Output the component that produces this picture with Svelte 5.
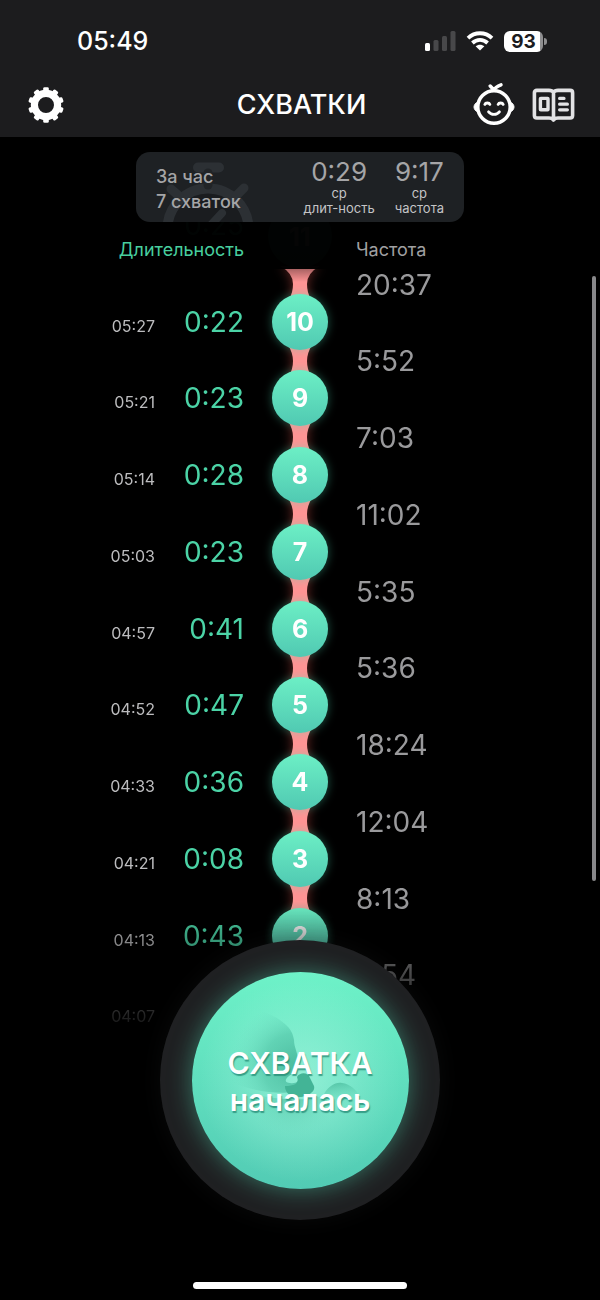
<script>
    let perHour = 7;
    let averages = [
        { value: "0:29", label: "длит-ность" },
        { value: "9:17", label: "частота" },
    ];

    let contractions = [
        { number: 11, time: "", duration: "0:25", frequency: "" },
        { number: 10, time: "05:27", duration: "0:22", frequency: "20:37" },
        { number: 9, time: "05:21", duration: "0:23", frequency: "5:52" },
        { number: 8, time: "05:14", duration: "0:28", frequency: "7:03" },
        { number: 7, time: "05:03", duration: "0:23", frequency: "11:02" },
        { number: 6, time: "04:57", duration: "0:41", frequency: "5:35" },
        { number: 5, time: "04:52", duration: "0:47", frequency: "5:36" },
        { number: 4, time: "04:33", duration: "0:36", frequency: "18:24" },
        { number: 3, time: "04:21", duration: "0:08", frequency: "12:04" },
        { number: 2, time: "04:13", duration: "0:43", frequency: "8:13" },
        { number: 1, time: "04:07", duration: "0:38", frequency: "5:54" },
    ];

    const teeth = [0, 36, 72, 108, 144, 180, 216, 252, 288, 324];
</script>

<div class="app">
    <header>
        <div class="status">
            <span class="clock">05:49</span>
            <div class="indicators">
                <svg width="31" height="20" viewBox="0 0 31 20" aria-hidden="true">
                    <rect x="0" y="12" width="5" height="8" rx="1.5" fill="#fff" />
                    <rect x="8.5" y="9" width="5" height="11" rx="1.5" fill="#48484a" />
                    <rect x="17" y="5" width="5" height="15" rx="1.5" fill="#48484a" />
                    <rect x="25.5" y="0" width="5" height="20" rx="1.5" fill="#48484a" />
                </svg>
                <svg width="28" height="20" viewBox="0 0 28 20" fill="none" stroke="#fff" stroke-width="3.8" aria-hidden="true">
                    <path d="M2 7.2C8.8 .6 19.2 .6 26 7.2" />
                    <path d="M6.4 12C10.8 7.9 17.2 7.9 21.6 12" />
                    <path d="M14 19.6 9.6 15.3C12 13.2 16 13.2 18.4 15.3Z" fill="#fff" stroke="none" />
                </svg>
                <div class="battery"><span>93</span></div>
            </div>
        </div>

        <nav>
            <div class="side">
                <button class="icon" aria-label="Настройки">
                    <svg width="36" height="36" viewBox="-18 -18 36 36">
                        <circle r="11.6" fill="none" stroke="#fff" stroke-width="7.2" />
                        {#each teeth as angle}
                            <rect x="-2.8" y="-17.8" width="5.6" height="6" rx="1.4" fill="#fff" transform="rotate({angle})" />
                        {/each}
                    </svg>
                </button>
            </div>
            <h1>СХВАТКИ</h1>
            <div class="side right">
                <button class="icon" aria-label="Малыш">
                    <svg width="42" height="44" viewBox="0 2 42 44" fill="none" stroke="#fff" stroke-linecap="round" stroke-linejoin="round">
                        <circle cx="21" cy="26" r="16.2" stroke-width="3.5" />
                        <path d="M4.6 21C2.5 22 1 24 1 26S2.5 30 4.6 31Z" fill="#fff" stroke-width="1" />
                        <path d="M37.4 21C39.5 22 41 24 41 26S39.5 30 37.4 31Z" fill="#fff" stroke-width="1" />
                        <path d="M21 9 17.2 5M21 9C22 6.6 24.6 5 28 3.8" stroke-width="3.4" />
                        <path d="M11.8 23.4C12.5 21.5 16.2 21.5 16.9 23.4M25.1 23.4C25.8 21.5 29.5 21.5 30.2 23.4" stroke-width="2.8" />
                        <path d="M15.6 30.8C18.4 34.2 23.6 34.2 26.4 30.8" stroke-width="2.9" />
                    </svg>
                </button>
                <button class="icon" aria-label="Справка">
                    <svg width="43" height="36" viewBox="0 0 43 36" fill="none" stroke="#e3e3e5" stroke-width="3.6" stroke-linecap="round" stroke-linejoin="round">
                        <path d="M21.5 5.4C20.6 4 19 3.4 17 3.4H4.8C3.2 3.4 2.4 4.2 2.4 5.8V28.6C2.4 30.2 3.2 31 4.8 31H17C19 31 20.6 31.6 21.5 33C22.4 31.6 24 31 26 31H38.2C39.8 31 40.6 30.2 40.6 28.6V5.8C40.6 4.2 39.8 3.4 38.2 3.4H26C24 3.4 22.4 4 21.5 5.4ZV32" />
                        <rect x="8.4" y="11.4" width="7.6" height="11.4" rx="0.4" stroke-width="3.4" />
                        <path d="M27.6 11.4H32M27.6 17.2H35.4M27.6 22.8H35.4" stroke-width="3.2" />
                    </svg>
                </button>
            </div>
        </nav>
    </header>

    <main>
        <div class="top">
            <section class="summary">
                <svg class="stopwatch" width="120" height="70" viewBox="0 0 120 70" fill="none" stroke="#2c3034" stroke-linecap="round" aria-hidden="true">
                    <circle cx="72" cy="77" r="40.5" stroke-width="10" fill="#1a1c1f" />
                    <path d="M62 15.5H83" stroke-width="10" />
                    <path d="M72 21V33" stroke-width="9" stroke="#212427" />
                    <path d="M35 37 43 44M108 36 100 44" stroke-width="9" />
                    <path d="M74 74 86 61" stroke-width="8" />
                </svg>
                <p>За час<br />{perHour} схваток</p>
                <div class="averages">
                    {#each averages as average}
                        <div class="average">
                            <strong>{average.value}</strong>
                            <span>ср</span>
                            <span>{average.label}</span>
                        </div>
                    {/each}
                </div>
            </section>
            <div class="headings">
                <span class="heading-duration">Длительность</span>
                <span class="heading-frequency">Частота</span>
            </div>
        </div>

        <ol>
            {#each contractions as item, index}
                <li class:latest={index === 0}>
                    <div class="left">
                        <time>{item.time}</time>
                        <span class="duration">{item.duration}</span>
                    </div>
                    <div class="badge">
                        <svg width="56" height="81" viewBox="0 0 56 81" aria-hidden="true">
                            <defs>
                                <linearGradient id="bead" x1="0" y1="0" x2="0" y2="1">
                                    <stop offset="0" stop-color="#6cefc5" />
                                    <stop offset="1" stop-color="#50c9b2" />
                                </linearGradient>
                                <linearGradient id="shade" gradientUnits="userSpaceOnUse" x1="0" y1="76" x2="0" y2="90">
                                    <stop offset="0" stop-color="#a35f5f" />
                                    <stop offset="1" stop-color="#ff9494" />
                                </linearGradient>
                            </defs>
                            {#if index === 0}
                                <path class="neck" d="M8 74Q21 81 21 92Q21 101 17 107H39Q35 101 35 92Q35 81 48 74Z" style:fill="url(#shade)" />
                                <circle class="bead" cx="28" cy="44" r="32" fill="url(#bead)" />
                            {:else}
                                {#if index < contractions.length - 1}
                                    <path class="neck" d="M16 76Q21 84 21 92Q21 100 17 107H39Q35 100 35 92Q35 84 40 76Z" />
                                {/if}
                                <circle class="bead" cx="28" cy="53" r="28" fill="url(#bead)" />
                            {/if}
                        </svg>
                        <span>{item.number}</span>
                    </div>
                    <span class="frequency">{item.frequency}</span>
                </li>
            {/each}
        </ol>
        <div class="scrollbar"></div>
    </main>

    <footer>
        <div class="dial">
            <button class="start">
                <svg class="baby" viewBox="0 0 217 217" aria-hidden="true">
                    <defs>
                        <radialGradient id="head" gradientUnits="userSpaceOnUse" cx="104" cy="94" r="66">
                            <stop offset="0" stop-color="#43b598" stop-opacity="0.9" />
                            <stop offset="0.5" stop-color="#4dc2a4" stop-opacity="0.6" />
                            <stop offset="1" stop-color="#6fe3c5" stop-opacity="0" />
                        </radialGradient>
                        <linearGradient id="foot" x1="0.3" y1="0" x2="0.6" y2="1">
                            <stop offset="0" stop-color="#45b798" stop-opacity="0.7" />
                            <stop offset="1" stop-color="#6fe3c5" stop-opacity="0" />
                        </linearGradient>
                        <radialGradient id="body" gradientUnits="userSpaceOnUse" cx="100" cy="116" r="52">
                            <stop offset="0" stop-color="#42b295" stop-opacity="0.8" />
                            <stop offset="1" stop-color="#6fe3c5" stop-opacity="0" />
                        </radialGradient>
                    </defs>
                    <path d="M30 40C50 30 80 40 93 52C99 57 101 62 102 68C102 76 106 80 106 90C107 97 101 101 97 104C92 108 93 111 98 111C104 112 108 109 108 103L116 118C90 124 60 120 34 108Z" fill="url(#head)" />
                    <path d="M50 118C76 128 110 130 130 124C142 130 158 126 164 120C160 154 130 172 102 170C76 168 56 146 50 118Z" fill="url(#body)" />
                    <path d="M132 122C137 114 143 110 150 111C158 112 166 118 169 128C160 136 142 134 132 122Z" fill="url(#foot)" />
                    <path d="M105 105C108 100 116 100 118 106L122 114C124 121 112 126 104 125C97 124 93 120 93 114C101 114 108 112 105 105Z" fill="#43b496" />
                </svg>
                <span>СХВАТКА<br />началась</span>
            </button>
        </div>
        <div class="home-indicator"></div>
    </footer>
</div>

<style>
    :global(body) {
        background: #000;
    }

    .app {
        display: flex;
        flex-direction: column;
        min-height: 100vh;
        overflow: hidden;
        background: #000;
        color: #fff;
        font-family: Inter, "Liberation Sans", sans-serif;
    }

    header {
        padding-bottom: 10px;
        background: #1c1c1e;
    }

    .status {
        display: flex;
        align-items: center;
        justify-content: space-between;
        height: 82px;
        padding: 0 57px 0 77px;
    }

    .clock {
        font-size: 25px;
        font-weight: 500;
    }

    .indicators {
        display: flex;
        align-items: center;
        gap: 10px;
    }

    .battery {
        position: relative;
        width: 39px;
        height: 21px;
        border-radius: 6px;
        background: linear-gradient(90deg, #fff 92%, #8e8e90 92%);
        color: #1c1c1e;
        font-size: 19px;
        font-weight: 700;
        line-height: 21px;
        text-align: center;
    }

    .battery::after {
        content: "";
        position: absolute;
        top: 7px;
        right: -4px;
        width: 3px;
        height: 7px;
        border-radius: 0 3px 3px 0;
        background: #8e8e90;
    }

    nav {
        display: grid;
        grid-template-columns: 1fr auto 1fr;
        align-items: center;
        height: 45px;
        padding: 0 25px 0 28px;
    }

    .side {
        display: flex;
        align-items: center;
        gap: 17px;
    }

    .right {
        justify-content: flex-end;
    }

    h1 {
        margin: 0;
        font-size: 27px;
        font-weight: 500;
        line-height: 45px;
    }

    button {
        padding: 0;
        border: none;
        background: none;
        color: inherit;
        font-family: inherit;
        cursor: pointer;
    }

    .icon,
    svg {
        display: block;
    }

    main {
        position: relative;
    }

    .top {
        position: relative;
        z-index: 1;
        padding: 15px 16px 0;
        background: rgba(0, 0, 0, 0.98);
    }

    .summary {
        position: relative;
        display: flex;
        align-items: center;
        justify-content: space-between;
        box-sizing: border-box;
        width: 328px;
        height: 70px;
        margin: 0 auto;
        padding: 0 20px;
        overflow: hidden;
        border-radius: 14px;
        background: #1e2124;
        color: #a5a5a7;
    }

    .stopwatch {
        position: absolute;
        top: 0;
        left: 0;
    }

    .summary p {
        position: relative;
        margin: 4px 0 0;
        font-size: 18px;
        font-weight: 500;
        line-height: 25px;
    }

    .averages {
        display: flex;
        gap: 20px;
    }

    .average {
        display: flex;
        flex-direction: column;
        align-items: center;
        font-size: 13px;
        line-height: 15px;
        color: #c4c4c6;
    }

    .average strong {
        font-size: 26px;
        font-weight: 400;
        line-height: 28px;
        color: #a5a5a7;
    }

    .headings,
    li {
        display: grid;
        grid-template-columns: 1fr 56px 1fr;
        column-gap: 28px;
    }

    .headings {
        height: 47px;
        font-size: 18px;
        line-height: 56px;
    }

    .heading-duration {
        color: #48cf9f;
        text-align: right;
    }

    .heading-frequency {
        grid-column: 3;
        color: #a0a0a2;
    }

    ol {
        display: grid;
        grid-auto-rows: 1fr;
        height: 844px;
        margin: -77px 0 0;
        padding: 0 16px;
        list-style: none;
        -webkit-mask-image: linear-gradient(#000 710px, transparent 850px);
        mask-image: linear-gradient(#000 710px, transparent 850px);
    }

    .left {
        display: flex;
        align-items: baseline;
        justify-content: flex-end;
        padding-top: 36px;
        line-height: 34px;
    }

    time {
        font-size: 16px;
        color: #bcbcbe;
    }

    .duration {
        width: 89px;
        font-size: 28px;
        font-weight: 400;
        color: #4bd3a6;
        text-align: right;
    }

    .badge {
        display: grid;
        height: 76px;
    }

    .badge svg,
    .badge span {
        grid-area: 1 / 1;
    }

    .badge svg {
        overflow: visible;
    }

    .badge span {
        z-index: 1;
        padding-top: 36px;
        font-size: 25px;
        font-weight: 700;
        line-height: 34px;
        text-align: center;
    }

    .latest .left {
        padding-top: 16px;
    }

    .latest .badge span {
        padding-top: 28px;
    }

    .neck {
        fill: #ff9494;
        filter: drop-shadow(0 0 6px rgba(255, 100, 90, 0.4));
    }

    .bead {
        filter: drop-shadow(0 0 5px rgba(80, 220, 180, 0.4));
    }

    .latest .bead {
        filter: none;
        opacity: 0.7;
    }

    .frequency {
        font-size: 28px;
        font-weight: 400;
        line-height: 32px;
        color: #9a9a9c;
    }

    .scrollbar {
        position: absolute;
        top: 139px;
        right: 4px;
        width: 4px;
        height: 605px;
        border-radius: 2px;
        background: #88888a;
    }

    footer {
        position: relative;
        z-index: 2;
        display: flex;
        flex: 1;
        flex-direction: column;
        align-items: center;
        justify-content: space-between;
        margin-top: -96px;
        padding-bottom: 11px;
    }

    .dial {
        display: grid;
        place-items: center;
        width: 280px;
        height: 280px;
        border-radius: 50%;
        background: #1f2022;
        box-shadow: 0 0 24px rgba(31, 32, 34, 0.3);
    }

    .start {
        display: grid;
        place-items: center;
        width: 217px;
        height: 217px;
        border-radius: 50%;
        background:
            radial-gradient(circle, rgba(180, 250, 230, 0.6), rgba(180, 250, 230, 0) 66%),
            linear-gradient(#6ef2c8, #52cbb4);
        box-shadow: 0 0 24px rgba(85, 225, 185, 0.45);
        font-size: 30px;
        font-weight: 600;
        line-height: 37px;
    }

    .baby,
    .start span {
        grid-area: 1 / 1;
    }

    .baby {
        width: 100%;
    }

    .start span {
        z-index: 1;
        padding-top: 4px;
        text-shadow: 1px 2px 1px rgba(30, 130, 110, 0.7);
    }

    .home-indicator {
        width: 214px;
        height: 7px;
        border-radius: 4px;
        background: #fff;
    }
</style>
